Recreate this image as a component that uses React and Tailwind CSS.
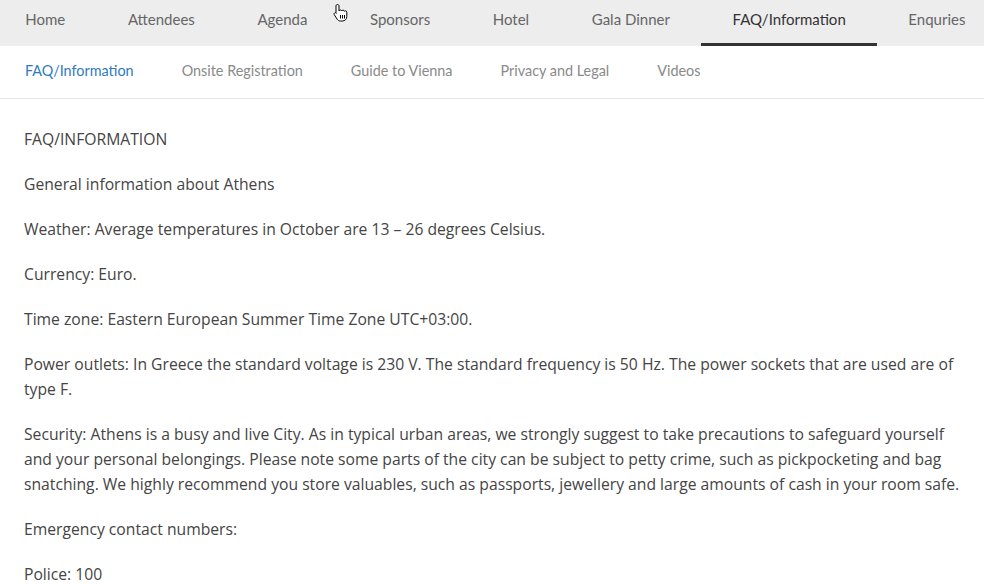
import React from 'react';

const mainNav = ['Home', 'Attendees', 'Agenda', 'Sponsors', 'Hotel', 'Gala Dinner', 'FAQ/Information', 'Enquries'];
const subNav = ['FAQ/Information', 'Onsite Registration', 'Guide to Vienna', 'Privacy and Legal', 'Videos'];

const paragraphs = [
  'FAQ/INFORMATION',
  'General information about Athens',
  'Weather: Average temperatures in October are 13 – 26 degrees Celsius.',
  'Currency: Euro.',
  'Time zone: Eastern European Summer Time Zone UTC+03:00.',
  'Power outlets: In Greece the standard voltage is 230 V. The standard frequency is 50 Hz. The power sockets that are used are of type F.',
  'Security: Athens is a busy and live City. As in typical urban areas, we strongly suggest to take precautions to safeguard yourself and your personal belongings. Please note some parts of the city can be subject to petty crime, such as pickpocketing and bag snatching. We highly recommend you store valuables, such as passports, jewellery and large amounts of cash in your room safe.',
  'Emergency contact numbers:',
  'Police: 100',
];

// mouse pointer captured in the screenshot
const HandCursor = () => (
  <svg className="absolute left-[333px] top-[3px]" width="15" height="20" viewBox="0 0 15 20">
    <path
      d="M4.5 1.5c.8 0 1.5.6 1.5 1.4V8c.2-.6.8-1 1.4-1 .7 0 1.2.4 1.4 1 .2-.5.7-.8 1.3-.8.7 0 1.2.5 1.3 1.1.2-.3.6-.5 1-.5.8 0 1.4.6 1.4 1.4v4.3c0 2.6-1.8 4.5-4.3 4.5H7.3c-1.3 0-2.3-.6-3-1.6L1.3 11.8c-.4-.6-.3-1.4.3-1.8.6-.4 1.4-.3 1.8.3L3 9.8V2.9c0-.8.7-1.4 1.5-1.4z"
      fill="#fff"
      stroke="#000"
      strokeWidth="1"
    />
    <path d="M7.5 12v3.5M9.5 12v3.5M11.5 12v3.5" stroke="#000" strokeWidth="1" />
  </svg>
);

const App = () => {
  return (
    <div className="relative min-h-screen bg-white overflow-hidden font-['Lato',sans-serif]">
      {/* Main nav */}
      <nav className="bg-[#ededed] h-[46px]">
        <ul className="flex ml-[-6px] h-full">
          {mainNav.map((item) => {
            const active = item === 'FAQ/Information';
            return (
              <li
                key={item}
                className={
                  active
                    ? 'px-[31.3px] flex items-center pb-[4px] text-[15px] text-[#333] border-b-[3px] border-[#333] whitespace-nowrap'
                    : 'px-[31.3px] flex items-center pb-[4px] text-[15px] text-[#666] border-b-[3px] border-transparent whitespace-nowrap'
                }
              >
                {item}
              </li>
            );
          })}
        </ul>
      </nav>

      {/* Sub nav */}
      <div className="h-[53px] border-b border-[#e6e6e6] flex items-center pl-[25px] pb-[2px] gap-[48px]">
        {subNav.map((item, i) => (
          <span
            key={item}
            className={i === 0 ? 'text-[14.4px] text-[#2f7bbf]' : 'text-[14.4px] text-[#8a8a8a]'}
          >
            {item}
          </span>
        ))}
      </div>

      {/* Content */}
      <div className="pl-[24px] pr-[24px] pt-[28px] text-[15.7px] leading-[25px] text-[#444] font-['Open_Sans',sans-serif]">
        {paragraphs.map((p, i) => (
          <p key={i} className="mb-[20px]">{p}</p>
        ))}
      </div>

      <HandCursor />
    </div>
  );
};

export default App;
